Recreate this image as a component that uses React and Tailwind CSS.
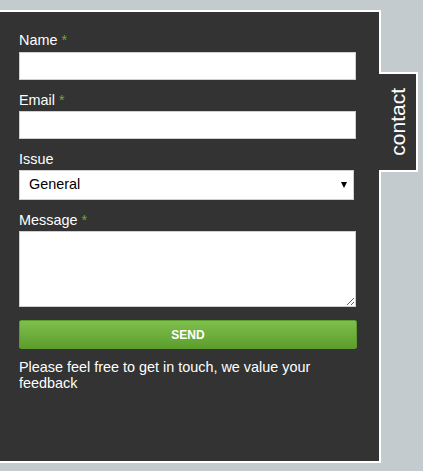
import React from "react";

function Label({ text, required, className = "" }) {
  return (
    <div className={`h-[17px] text-[14.4px] leading-[17px] text-white ${className}`}>
      {text}
      {required && <span className="text-[#67ab3c]"> *</span>}
    </div>
  );
}

export default function App() {
  return (
    <div className="w-[423px] h-[471px] bg-[#c3cbce] pt-[10px] font-['Liberation_Sans',Arial,sans-serif] overflow-hidden">
      <div className="flex items-start">
        <div className="w-[381px] h-[453px] bg-[#333333] border-t-2 border-r-2 border-b-2 border-white pt-[20px] pl-[19px] pr-[23px]">
          <Label text="Name" required className="mb-[3px]" />
          <input className="block w-full h-[28px] bg-white border border-[#cfcfcf] outline-none" />

          <Label text="Email" required className="mt-[12px] mb-[2px]" />
          <input className="block w-full h-[28px] bg-white border border-[#cfcfcf] outline-none" />

          <Label text="Issue" className="mt-[12px] mb-[2px]" />
          <div className="relative w-[335px] h-[30px]">
            <select className="appearance-none block w-full h-full bg-white border border-[#cfcfcf] pl-[9px] text-[14.4px] text-black outline-none rounded-none font-['Liberation_Sans',Arial,sans-serif]">
              <option>General</option>
            </select>
            <svg className="absolute right-[7px] top-[12px] pointer-events-none" width="6" height="6" viewBox="0 0 6 6">
              <path d="M0 0H6L3 6Z" fill="#000" />
            </svg>
          </div>

          <Label text="Message" required className="mt-[12px] mb-[2px]" />
          <textarea className="block w-full h-[76px] bg-white border border-[#cfcfcf] outline-none" />

          <button className="mt-[13px] block w-[338px] h-[29px] rounded-[2px] border border-[#5b9a2e] bg-gradient-to-b from-[#7fbf4c] to-[#5c9e2c] text-white text-[12px] font-bold">
            SEND
          </button>

          <p className="mt-[10px] text-[14.4px] leading-[16px] text-white">
            Please feel free to get in touch, we value your feedback
          </p>
        </div>
        <div className="relative z-10 -ml-[2px] mt-[62px] w-[39px] h-[100px] bg-[#333333] border-t-2 border-r-2 border-b-2 border-white flex items-center justify-center">
          <span className="[writing-mode:vertical-rl] rotate-180 text-white text-[21px] leading-none">
            contact
          </span>
        </div>
      </div>
    </div>
  );
}
